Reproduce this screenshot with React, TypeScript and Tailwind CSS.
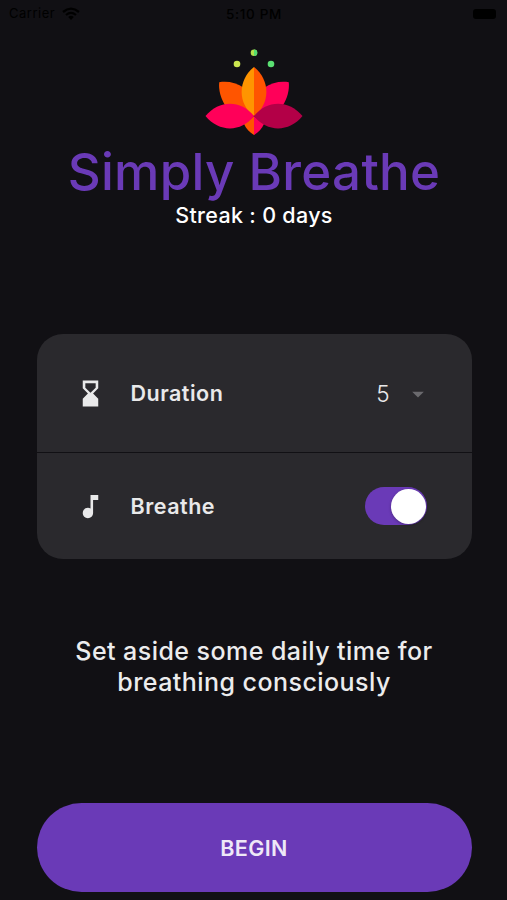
function StatusBar() {
  return (
    <header className="flex h-7 items-center justify-between pr-[11px] pl-[9px] text-black">
      <div className="flex flex-1 items-center gap-[7px] text-[13px] tracking-[0.5px]">
        <span>Carrier</span>
        <svg width="18" height="14" viewBox="0 0 18 14" fill="none" stroke="currentColor">
          <path d="M1 5Q9-1.8 17 5" strokeWidth="2.3" />
          <path d="M4 8Q9 3.8 14 8" strokeWidth="2.2" />
          <path d="M6.2 10Q9 7.6 11.8 10L9 13Z" fill="currentColor" stroke="none" />
        </svg>
      </div>
      <span className="pl-[3px] text-[13.5px] font-medium tracking-[0.7px]">5:10 PM</span>
      <div className="flex flex-1 justify-end">
        <div className="h-[10px] w-[23px] rounded-[3px] bg-black" />
      </div>
    </header>
  );
}

function Lotus() {
  return (
    <svg className="mt-[19px] block" width="98" height="89" viewBox="0 0 98 89">
      <circle cx="32" cy="17" r="3.3" fill="#cbe64f" />
      <circle cx="49" cy="5.7" r="3.3" fill="#b5e04c" />
      <path d="M49 2.4a3.3 3.3 0 0 1 0 6.6Z" fill="#55dc70" />
      <circle cx="66" cy="17" r="3.3" fill="#5be073" />
      <path d="M14.2 35.2C23 34 31 35.500 38.500 40.500L49 69L20.500 59C15.500 51 13.500 43 14.2 35.2Z" fill="#ff5500" />
      <path d="M83.8 35.2C75 34 67 35.500 59.500 40.500L49 69L77.500 59C82.500 51 84.500 43 83.8 35.2Z" fill="#ff0059" />
      <path d="M49 69L39 77C41 81.500 44.500 85.500 49 88Z" fill="#ff5500" />
      <path d="M49 69L59 77C57 81.500 53.500 85.500 49 88Z" fill="#ff0059" />
      <path d="M49 20C32.500 33 32.500 57 49 69Z" fill="#ff9500" />
      <path d="M49 20C65.500 33 65.500 57 49 69Z" fill="#ff5500" />
      <path d="M.5 69C14 52.500 36 52.500 49 69C36 85.500 14 85.500 .5 69Z" fill="#ff0059" />
      <path d="M97.500 69C84 52.500 62 52.500 49 69C62 85.500 84 85.500 97.500 69Z" fill="#b30047" />
    </svg>
  );
}

function SettingsCard() {
  return (
    <section className="mt-[106px] h-[225px] w-[435px] overflow-hidden rounded-[26px] bg-[#2a292d] text-[#e9e9ea]">
      <div className="flex h-[119px] items-center border-b border-[#111014] pt-px pr-[40px] pl-[38px]">
        <svg width="31" height="31" viewBox="0 0 24 24" fill="currentColor">
          <path d="M18 22l-.01-6L14 12l3.990-4.010L18 2H6v6l4 4-4 3.990V22h12zM8 7.500V4h8v3.500l-4 4-4-4z" />
        </svg>
        <span className="ml-[25px] flex-1 text-[21.5px] font-semibold tracking-[0.5px]">Duration</span>
        <span className="text-[22.5px] font-light">5</span>
        <svg className="ml-[14px] text-[#6b6a6e]" width="28" height="28" viewBox="0 0 24 24" fill="currentColor">
          <path d="M7 10l5 5 5-5z" />
        </svg>
      </div>
      <div className="flex h-[106px] items-center pr-[45px] pl-[38px]">
        <svg width="31" height="31" viewBox="0 0 24 24" fill="currentColor">
          <path d="M12 3v10.550c-.59-.34-1.270-.55-2-.55-2.210 0-4 1.790-4 4s1.790 4 4 4 4-1.790 4-4V7h4V3h-6z" />
        </svg>
        <span className="ml-[25px] flex-1 text-[21.5px] font-semibold tracking-[0.5px]">Breathe</span>
        <button className="flex h-[38px] w-[62px] items-center justify-end rounded-full bg-[#6a3ab7] pr-px" aria-label="Breathe">
          <span className="size-[35px] rounded-full bg-white shadow-[0_1px_3px_rgba(0,0,0,0.3)]" />
        </button>
      </div>
    </section>
  );
}

export default function App() {
  return (
    <main className="flex h-[900px] w-[507px] flex-col overflow-hidden bg-[#111014] font-['Inter','Liberation_Sans',sans-serif]">
      <StatusBar />
      <div className="flex flex-col items-center pl-px">
        <Lotus />
        <h1 className="mt-[5px] text-[51px] leading-[62px] font-medium tracking-[0.3px] whitespace-nowrap text-[#6a3ab7]">Simply Breathe</h1>
        <p className="-mt-px text-[21.5px] leading-[26px] font-medium tracking-[0.3px] text-white">Streak : 0 days</p>
        <SettingsCard />
        <p className="mt-[77px] text-center text-[25px] leading-[30.5px] font-medium tracking-[0.45px] whitespace-nowrap text-[#ececed]">
          Set aside some daily time for
          <br />
          breathing consciously
        </p>
        <button className="mt-[106px] h-[89px] w-[435px] rounded-full bg-[#6a3ab7] pt-px text-[21.5px] font-semibold tracking-[0.4px] text-[#eee8f7]">
          BEGIN
        </button>
      </div>
    </main>
  );
}
